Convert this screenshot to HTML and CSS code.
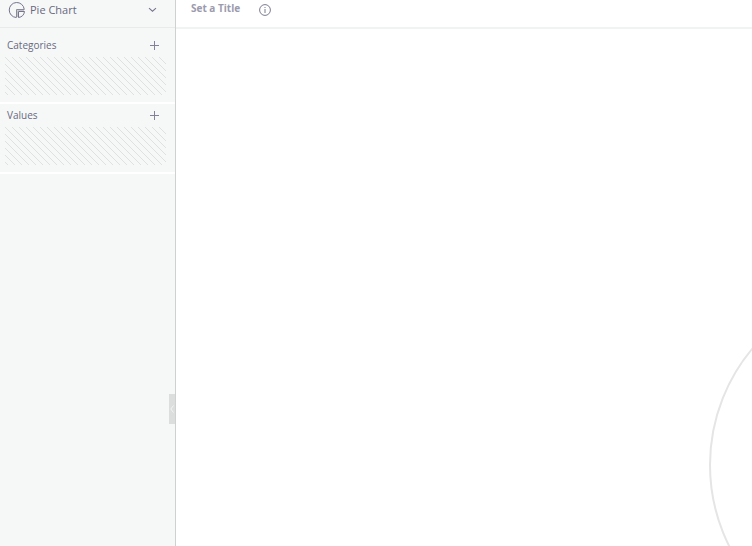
FILE: index.html
```html
<!DOCTYPE html>
<html lang="en">
<head>
<meta charset="utf-8">
<title>Pie Chart</title>
<link rel="stylesheet" href="styles.css">
</head>
<body>
<div class="app">
  <aside class="sidebar">
    <button class="chart-type" type="button">
      <svg width="18" height="18" viewBox="0 0 18 18" fill="none" stroke="#74748a">
        <path d="M16.2 8.2A7.5 7.5 0 1 0 8.3 16.5"/>
        <path d="M8.5 16.5V8.5H16.5" stroke="#8c8c98"/>
        <path d="M9.5 16V9.5H16" stroke="#c4c4ca"/>
        <path d="M10.5 16.5C14 16 16 14 16.5 10.5H10.5Z"/>
      </svg>
      <span class="chart-name">Pie Chart</span>
      <svg width="9" height="6" viewBox="0 0 9 6" fill="none" stroke="#74748c" stroke-width="1.1"><path d="M1 1.2L4.5 4.2L8 1.2"/></svg>
    </button>
    <section class="field">
      <header class="field-head">
        <h2>Categories</h2>
        <button class="add" type="button" aria-label="Add category"><svg width="9" height="9" viewBox="0 0 9 9" stroke="#82829a"><path d="M4.5 0V9M0 4.5H9"/></svg></button>
      </header>
      <div class="drop"></div>
    </section>
    <section class="field">
      <header class="field-head">
        <h2>Values</h2>
        <button class="add" type="button" aria-label="Add value"><svg width="9" height="9" viewBox="0 0 9 9" stroke="#82829a"><path d="M4.5 0V9M0 4.5H9"/></svg></button>
      </header>
      <div class="drop"></div>
    </section>
    <button class="collapse" type="button" aria-label="Collapse panel"><svg width="4" height="8" viewBox="0 0 4 8" fill="none" stroke="#f2f3f3"><path d="M3.5 0.5L0.8 4L3.5 7.5"/></svg></button>
  </aside>
  <main class="content">
    <header class="title-bar">
      <h1>Set a Title</h1>
      <button class="info" type="button" aria-label="Information">
        <svg width="12" height="12" viewBox="0 0 12 12" fill="none" stroke="#7c7c92"><circle cx="6" cy="6" r="5.4"/><path d="M6 5V9M6 3V4"/></svg>
      </button>
    </header>
    <div class="canvas">
      <svg class="pie" width="364" height="364" viewBox="0 0 364 364" fill="none" stroke="#e5e5e5" stroke-width="2"><circle cx="182" cy="182" r="181"/></svg>
    </div>
  </main>
</div>
</body>
</html>
```
FILE: styles.css
```css
* {
  box-sizing: border-box;
}

body {
  margin: 0;
  font-family: "Open Sans", sans-serif;
  color: #68687f;
  background: #fff;
}

button {
  display: flex;
  align-items: center;
  padding: 0;
  border: 0;
  background: none;
  font: inherit;
  color: inherit;
}

h1,
h2 {
  margin: 0;
}

.app {
  display: flex;
  height: 100vh;
  overflow: hidden;
}

.sidebar {
  position: relative;
  flex: 0 0 176px;
  background: #f6f8f8;
  border-right: 1px solid #cfd1d1;
}

.chart-type {
  width: 100%;
  height: 28px;
  padding: 0 18px 8px 8px;
  border-bottom: 1px solid #e9ebeb;
  font-size: 11px;
}

.chart-name {
  flex: 1;
  margin-left: 4px;
  text-align: left;
}

.field {
  padding: 3px 9px 7px 5px;
  border-bottom: 2px solid #fff;
}

.field:first-of-type {
  padding-top: 9px;
}

.field-head {
  display: flex;
  align-items: center;
  justify-content: space-between;
  height: 17px;
  margin-bottom: 3px;
  padding: 0 7px 0 2px;
}

.field-head h2 {
  font-size: 10px;
  font-weight: 400;
  line-height: 17px;
}

.drop {
  height: 38px;
  background: linear-gradient(45deg, #dfe1e1 0 6%, transparent 6% 44%, #dfe1e1 44% 56%, transparent 56% 94%, #dfe1e1 94%) 0 0 / 7px 7px;
}

.collapse {
  position: absolute;
  top: 394px;
  right: 0;
  justify-content: center;
  width: 6px;
  height: 30px;
  background: #dcdede;
}

.content {
  display: flex;
  flex: 1;
  flex-direction: column;
  min-width: 0;
}

.title-bar {
  display: flex;
  gap: 19px;
  height: 29px;
  padding: 0 15px;
  border-bottom: 2px solid #f1f2f2;
}

.title-bar h1 {
  font-size: 10px;
  font-weight: 700;
  line-height: 17px;
  color: #9b9bad;
}

.info {
  height: 20px;
}

.canvas {
  position: relative;
  flex: 1;
  overflow: hidden;
}

.pie {
  position: absolute;
  top: 254px;
  left: 533px;
}
```
